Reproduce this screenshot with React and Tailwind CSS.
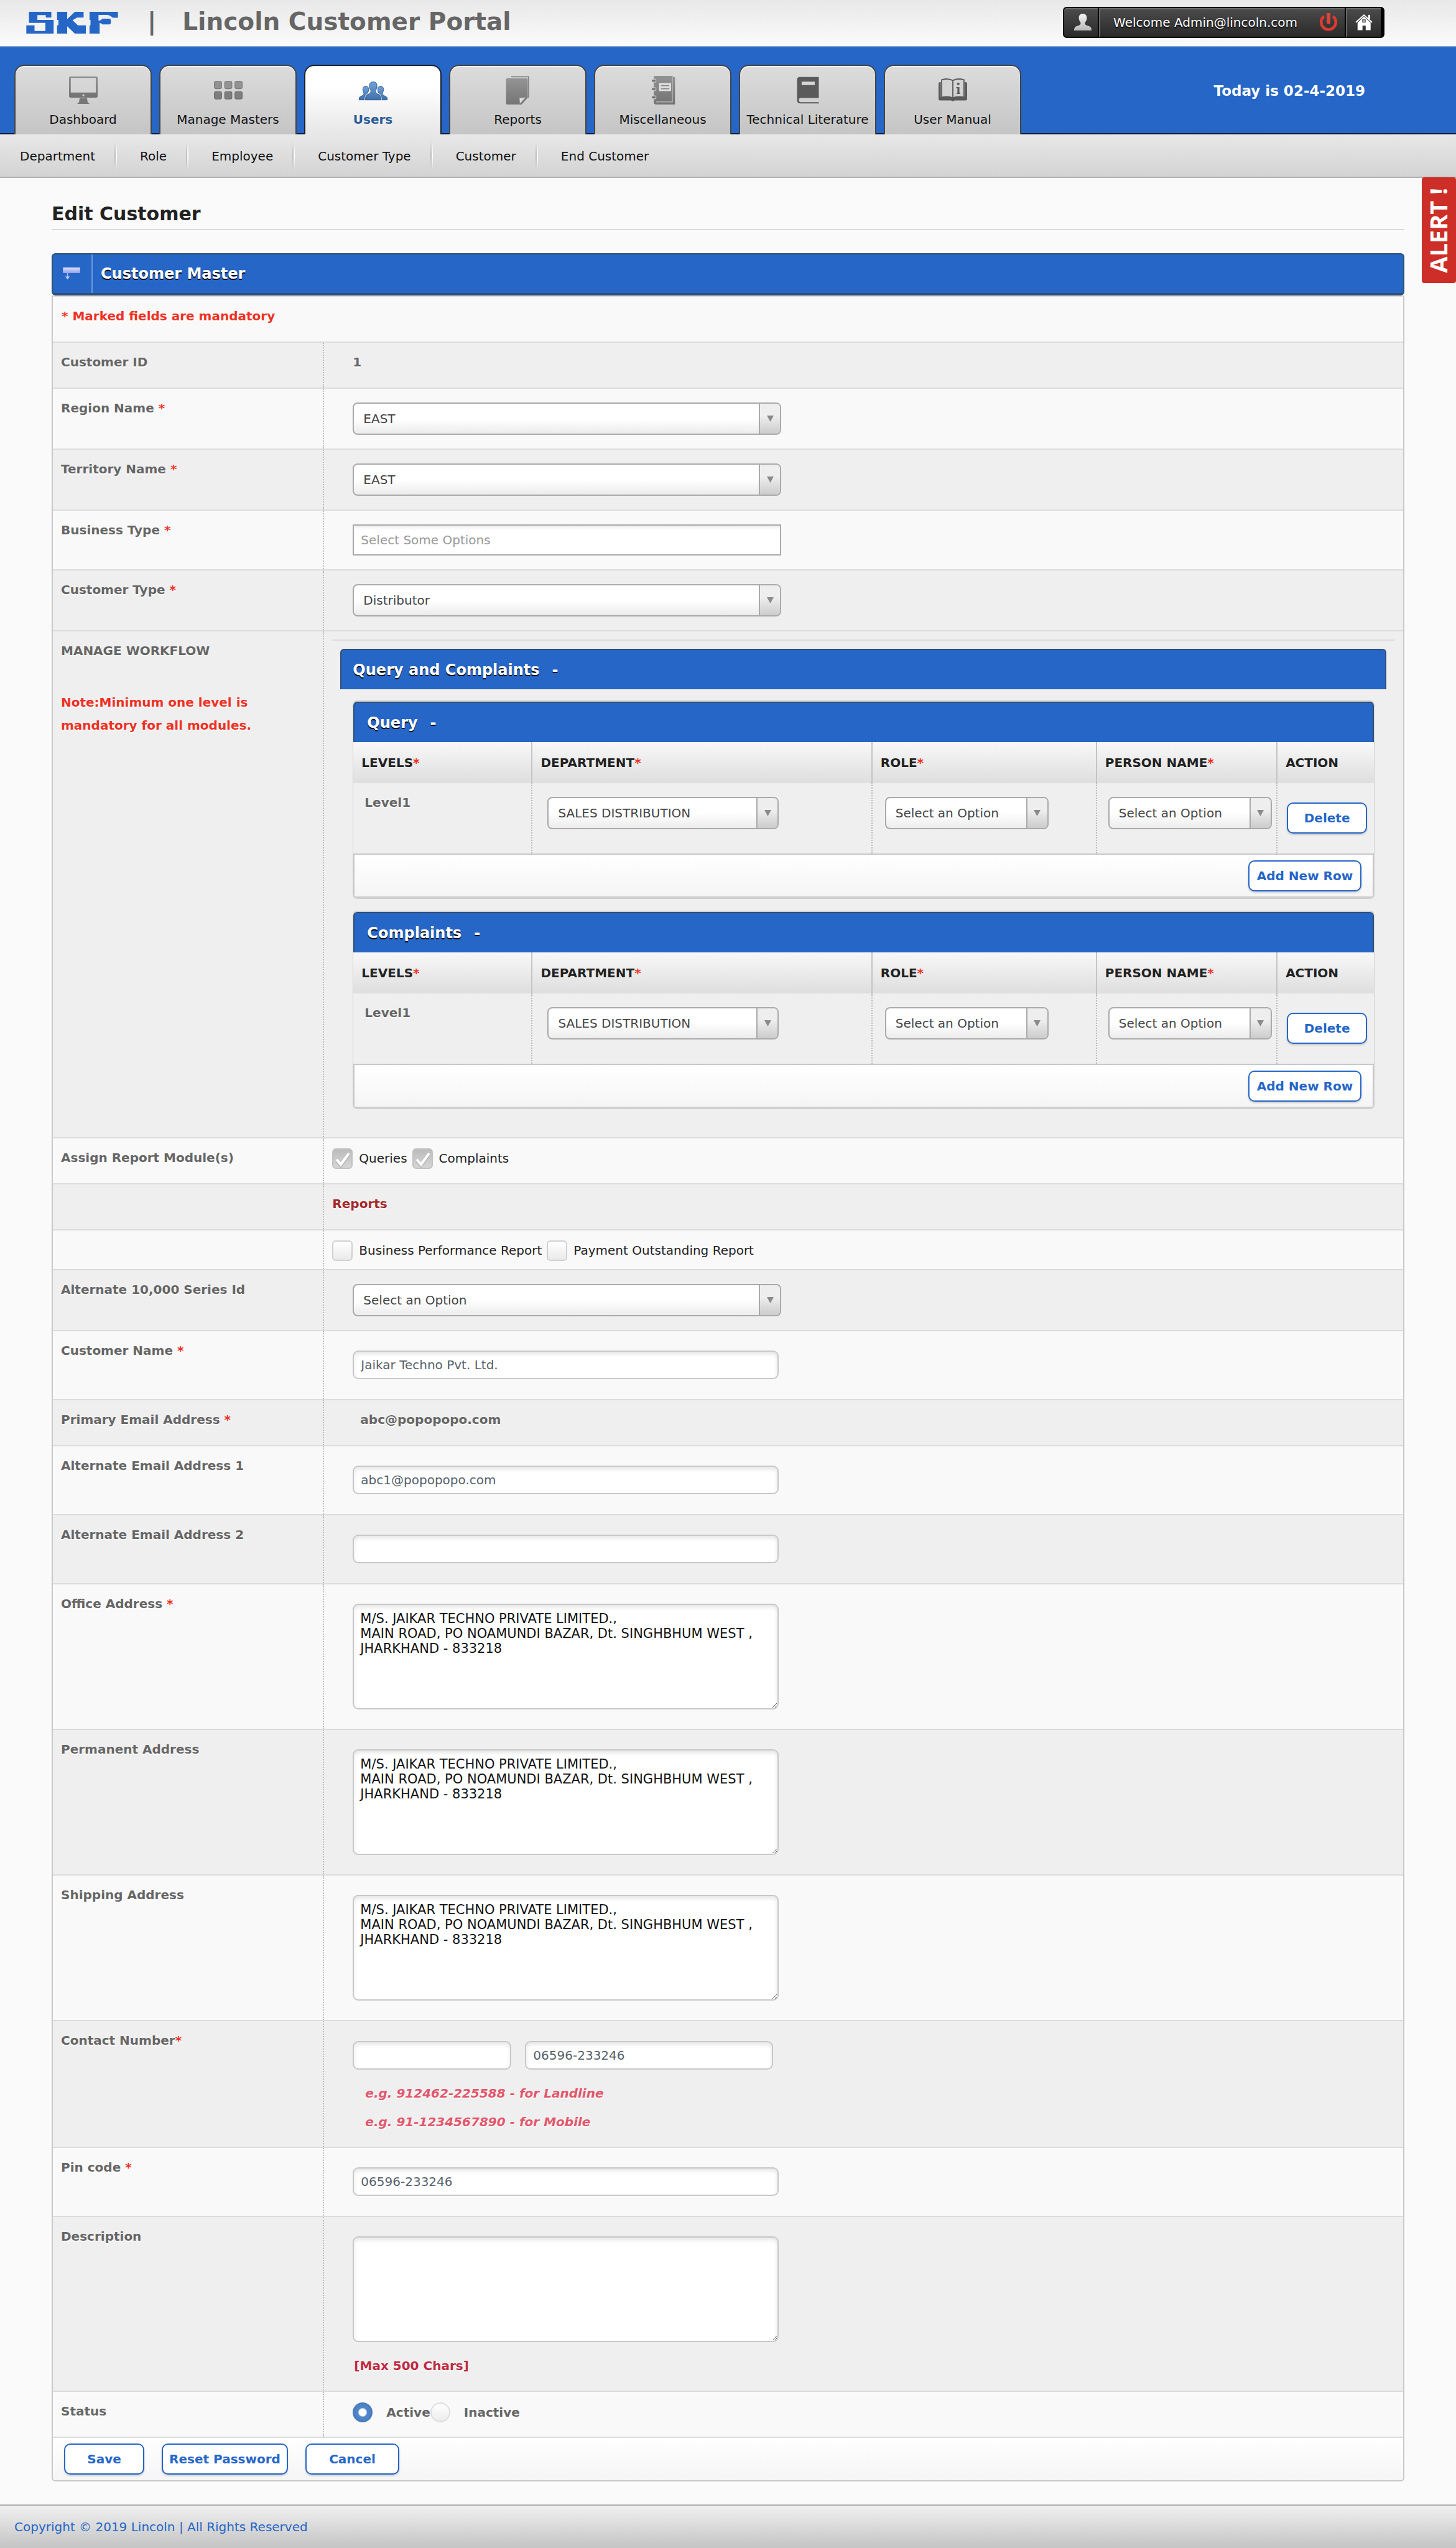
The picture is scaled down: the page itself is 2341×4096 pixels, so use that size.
import React from "react";

const FONT = "font-['DejaVu_Sans',Verdana,sans-serif]";

/* ---------- icons ---------- */

function SkfLogo() {
  return (
    <svg viewBox="48 60 480 114" className="h-[35px] w-[148px]" role="img" aria-label="SKF">
      <g fill="#2566c7">
        <path d="M62 60H179V90H150V77H106V102H191V174H48V131H91V160H148V118H62Z" />
        <path d="M209 60H262V98L302 60H348V90H314L290 104L318 131H360V174H302L262 136V174H209V131H216V102H209Z" />
        <path d="M379 60H528V91H500Q486 76 470 76H426V106Q440 106 446 96H484Q491 98 491 111Q491 124 484 126H446Q440 119 432 119V174H379V131H384V102H379Z" />
      </g>
    </svg>
  );
}

function Grad({ id, a, b }) {
  return (
    <linearGradient id={id} x1="0" y1="0" x2="0" y2="1">
      <stop offset="0" stopColor={a} />
      <stop offset="1" stopColor={b} />
    </linearGradient>
  );
}

function MonitorIcon() {
  return (
    <svg viewBox="0 0 50 50" className="size-[46px]" aria-hidden="true">
      <defs><Grad id="gm" a="#8b8b8b" b="#737373" /></defs>
      <path fill="url(#gm)" fillRule="evenodd" d="M3 1H47Q50 1 50 4V35Q50 38 47 38H3Q0 38 0 35V4Q0 1 3 1ZM4.500 3.500Q3 3.500 3 5V29H47V5Q47 3.500 45.500 3.500ZM25 32A1.800 1.800 0 1 0 25 35.600A1.800 1.800 0 1 0 25 32Z" />
      <path fill="#777" d="M18.500 39H31.500L32.500 46L36 49H14L17.500 46Z" />
    </svg>
  );
}

function GridIcon() {
  return (
    <svg viewBox="0 0 50 50" className="size-[46px]" aria-hidden="true">
      {[0, 18, 36].map((x) => (
        <g key={x}>
          <rect x={x + 0.6} y="9.600" width="12.800" height="12.800" rx="3" fill="#929292" stroke="#7b7b7b" strokeWidth="1.200" />
          <rect x={x + 0.6} y="27.600" width="12.800" height="12.800" rx="3" fill="#7e7e7e" stroke="#6c6c6c" strokeWidth="1.200" />
        </g>
      ))}
    </svg>
  );
}

function UsersIcon() {
  const side = "M12 18C15.500 18 17.500 20.500 17 25C16.800 27 16 28.500 15.200 30C15 33 16.500 34 20 35.500V42H0C0 38 1 36.500 4 35.500C7.500 34 9 33 8.800 30C8 28.500 7.200 27 7 25C6.500 20.500 8.500 18 12 18Z";
  return (
    <svg viewBox="0 0 50 50" className="size-[46px]" aria-hidden="true">
      <defs><Grad id="gu" a="#6fa2dc" b="#3d70ad" /></defs>
      <g fill="url(#gu)" stroke="#33567f" strokeWidth="1">
        <path d={side} />
        <path d={side} transform="matrix(-1 0 0 1 50 0)" />
      </g>
      <path fill="url(#gu)" stroke="#e8eef5" strokeWidth="3" d="M25 10.500C30 10.500 32 14 31.500 19C31.200 22 30 24 29 25.500C28.800 29 30.500 31 35 32.500C38 34 38.500 37 38.500 42H11.500C11.500 37 12 34 15 32.500C19.500 31 21.200 29 21 25.500C20 24 18.800 22 18.500 19C18 14 20 10.500 25 10.500Z" />
      <path fill="url(#gu)" stroke="#33567f" strokeWidth="1" d="M25 10.500C30 10.500 32 14 31.500 19C31.200 22 30 24 29 25.500C28.800 29 30.500 31 35 32.500C38 34 38.500 37 38.500 42H11.500C11.500 37 12 34 15 32.500C19.500 31 21.200 29 21 25.500C20 24 18.800 22 18.500 19C18 14 20 10.500 25 10.500Z" />
    </svg>
  );
}

function ReportsIcon() {
  return (
    <svg viewBox="0 0 50 50" className="size-[46px]" aria-hidden="true">
      <defs><Grad id="gr" a="#949494" b="#747474" /></defs>
      <path fill="none" stroke="#858585" strokeWidth="2" d="M13 1.500H43.500V38" />
      <path fill="url(#gr)" d="M6 4H40Q42 4 42 6V38L31 50H6Q4 50 4 48V6Q4 4 6 4Z" />
      <path fill="#dcdcdc" stroke="#8a8a8a" strokeWidth="1" d="M27 38.500L38.500 37.500L28 49Z" />
    </svg>
  );
}

function NotebookIcon() {
  return (
    <svg viewBox="0 0 50 50" className="size-[46px]" aria-hidden="true">
      <defs><Grad id="gn" a="#939393" b="#727272" /></defs>
      <path fill="url(#gn)" d="M10 0H42V2H45Q46 2 46 3V50H13Q9 50 9 46V2Q9 0 10 0Z" />
      <path fill="none" stroke="#bdbdbd" strokeWidth="1.200" d="M41.500 2V45.500H13" />
      <rect x="18" y="12.500" width="21" height="14" fill="#e0e0e0" />
      <path stroke="#888" strokeWidth="2" d="M21.500 17H36M21.500 22.500H36" />
      <g fill="#bcbcbc"><circle cx="10" cy="8.500" r="3.500" /><circle cx="10" cy="23" r="3.500" /><circle cx="10" cy="37.500" r="3.500" /></g>
      <path stroke="#6f6f6f" strokeWidth="3" strokeLinecap="round" d="M7 8.500H10.500M7 23H10.500M7 37.500H10.500" />
    </svg>
  );
}

function BookIcon() {
  return (
    <svg viewBox="0 0 50 50" className="size-[46px]" aria-hidden="true">
      <path fill="#5a5a5a" fillRule="evenodd" d="M11 2H44V38.500H13Q9.500 38.500 9 42Q9.500 46 13 46H44V48H12Q6 48 6 42V7Q6 2 11 2ZM14 10V16H37V10Z" />
    </svg>
  );
}

function ManualIcon() {
  return (
    <svg viewBox="0 0 50 50" className="size-[46px]" aria-hidden="true">
      <path fill="#5a5a5a" d="M4 11H3Q0 11 0 14V40Q0 43 3 43H22L25 44.500L28 43H47Q50 43 50 40V14Q50 11 47 11H46V37H4Z" />
      <path fill="#d3d3d3" stroke="#5a5a5a" strokeWidth="2" d="M25 8Q16 3.500 5.500 7V37.500Q16 34.500 25 38.500Q34 34.500 44.500 37.500V7Q34 3.500 25 8ZM25 8V38" />
      <circle cx="34.500" cy="14" r="2.200" fill="#5a5a5a" />
      <path fill="#5a5a5a" d="M31 19.500H36.500V29.500H38V31.500H31.500V29.500H33V21.500H31Z" />
    </svg>
  );
}

function PersonIcon() {
  return (
    <svg viewBox="0 0 30 30" className="size-[28px]" aria-hidden="true">
      <defs><Grad id="gp" a="#f4f4f4" b="#b9b9b9" /></defs>
      <path fill="url(#gp)" d="M15 0C19.500 0 22 3 21.800 8C21.500 11.500 20 13.500 18.800 15.500C18.500 18.500 20 19.800 24 21C28.500 22.500 30 24 30 29H0C0 24 1.500 22.500 6 21C10 19.800 11.500 18.500 11.200 15.500C10 13.500 8.500 11.500 8.200 8C8 3 10.500 0 15 0Z" />
    </svg>
  );
}

function PowerIcon() {
  return (
    <svg viewBox="0 0 32 33" className="size-[30px]" aria-hidden="true">
      <path fill="none" stroke="#dd3a2f" strokeWidth="5" d="M8 5.800A13 13 0 1 0 24 5.800" />
      <rect x="13" y="0" width="6" height="19" fill="#e0453a" />
    </svg>
  );
}

function HomeIcon() {
  return (
    <svg viewBox="0 0 30 29" className="size-[28px]" aria-hidden="true">
      <path fill="none" stroke="#fff" strokeWidth="2" d="M1 14.500L15 2L29 14.500" />
      <rect x="22.500" y="1.500" width="3" height="7.500" fill="#fff" />
      <path fill="#fff" d="M15 4.500L26.500 15V28H18V20H12.500V28H4V15Z" />
      <path stroke="#555" strokeWidth="1" d="M12.500 9.500H17.500V14.500H12.500ZM15 9.500V14.500M12.500 12H17.500" fill="none" />
    </svg>
  );
}

function MasterIcon() {
  return (
    <svg viewBox="0 0 30 24" className="h-[22px] w-[28px]" aria-hidden="true">
      <defs><Grad id="gc" a="#dfe4fb" b="#8f9fe6" /></defs>
      <rect x="0" y="1" width="30" height="10" rx="1" fill="url(#gc)" />
      <path fill="none" stroke="#a9b6ee" strokeWidth="2" d="M8 11V19" />
      <path fill="#c3ccf6" d="M4 17H12L8 22Z" />
    </svg>
  );
}

/* ---------- controls ---------- */

function Select({ label, value, className = "" }) {
  return (
    <div className={"relative h-[52px] w-full " + className}>
      <select
        aria-label={label}
        defaultValue={value}
        className="h-full w-full appearance-none rounded-[8px] border-2 border-[#aaa] bg-linear-to-b from-white from-50% to-[#ececec] pl-[15px] pr-[38px] text-[20px] text-[#444]"
      >
        <option>{value}</option>
      </select>
      <span className="pointer-events-none absolute inset-y-[2px] right-[2px] flex w-[34px] items-center justify-center rounded-r-[6px] border-l-2 border-[#aaa] bg-linear-to-b from-[#eee] from-40% to-[#ccc]">
        <svg viewBox="0 0 12 12" className="size-[11px]" aria-hidden="true">
          <path fill="#8a8a8a" d="M0 0H12L6 11Z" />
        </svg>
      </span>
    </div>
  );
}

const FIELD =
  "border-2 border-[#c8c8c8] bg-white shadow-[inset_0_4px_6px_rgba(0,0,0,0.10)]";

function TextInput({ label, value = "", className = "" }) {
  return (
    <input
      type="text"
      aria-label={label}
      defaultValue={value}
      className={FIELD + " block h-[46px] w-full rounded-[9px] px-[11px] text-[20px] text-[#56616b] " + className}
    />
  );
}

function TextArea({ label, value = "" }) {
  return (
    <textarea
      aria-label={label}
      defaultValue={value}
      className={FIELD + " block h-[170px] w-full max-w-[685px] rounded-[9px] px-[10px] py-[10px] text-[21px] leading-[24px] text-[#111]"}
    />
  );
}

function Button({ children, className = "" }) {
  return (
    <button
      type="button"
      className={
        "h-[50px] rounded-[10px] border-2 border-[#2566c7] bg-white text-[20px] font-bold text-[#2566c7] shadow-[0_2px_3px_rgba(0,0,0,0.18)] " +
        className
      }
    >
      {children}
    </button>
  );
}

function Check({ children, checked }) {
  return (
    <label className="flex items-center text-[20px] leading-[33px] text-[#222]">
      <span className="relative mr-[10px] flex size-[33px]">
        <input
          type="checkbox"
          defaultChecked={checked}
          disabled={checked}
          className="peer size-full appearance-none rounded-[6px] border-2 border-[#d0d0d0] bg-linear-to-b from-white to-[#eaeaea] checked:border-[#c2c2c2] checked:from-[#bcbcbc] checked:to-[#d6d6d6]"
        />
        <svg viewBox="0 0 33 33" className="pointer-events-none absolute inset-0 hidden peer-checked:block" aria-hidden="true">
          <path d="M7 19L14 27L27 9" fill="none" stroke="#999" strokeWidth="5" transform="translate(0 1)" opacity="0.4" />
          <path d="M7 18L14 26L27 8" fill="none" stroke="#fff" strokeWidth="4" />
        </svg>
      </span>
      {children}
    </label>
  );
}

function Radio({ children, checked }) {
  return (
    <label className="flex items-center text-[20px] font-bold leading-[32px] text-[#666]">
      <input
        type="radio"
        name="status"
        defaultChecked={checked}
        className="mr-[22px] size-[32px] appearance-none rounded-full border-2 border-[#dedede] bg-linear-to-b from-white to-[#ececec] checked:border-[#4a7ab8] checked:bg-[radial-gradient(circle,#fff_28%,#5288cc_38%,#4379ba_100%)]"
      />
      {children}
    </label>
  );
}

/* ---------- layout pieces ---------- */

const SHADOW = "[text-shadow:0_2px_0_#fff]";
const BAR = "bg-[#2566c7] text-[24px] font-bold text-white [text-shadow:0_2px_0_#000]";

function Star() {
  return <span className="text-[#ee3124]">*</span>;
}

function Row({ label, required, tight, children, body = "" }) {
  return (
    <div className="flex border-b-2 border-[#dcdcdc]">
      <div className={"w-[20.1%] shrink-0 border-r-2 border-dotted border-[#bdbdbd] pl-[13px] pt-[17px] text-[20px] font-bold leading-[28px] text-[#666] " + SHADOW}>
        {label}
        {required && (tight ? <Star /> : <> <Star /></>)}
      </div>
      <div className={"min-w-0 flex-1 " + body}>{children}</div>
    </div>
  );
}

const SELECT_BODY = "py-[22px] pl-[46px]";
const INPUT_BODY = "pt-[31px] pb-[32px] pl-[46px]";
const AREA_BODY = "py-[31px] pl-[46px]";
const TEXT_BODY = "pt-[17px] pb-[27px] text-[20px] font-bold leading-[28px] text-[#666] " + SHADOW;

function LevelTable({ title }) {
  return (
    <section className="mr-[46px] ml-[46px] overflow-hidden rounded-[7px] border-x-1 border-t-2 border-b-4 border-[#d0d0d0]">
      <h4 className={"h-[65px] rounded-t-[6px] border-x-2 border-t-2 border-[#2f5075] pl-[20px] leading-[64px] " + BAR}>
        {title}<span className="ml-[20px]">-</span>
      </h4>
      <table className="w-full table-fixed border-collapse">
        <thead>
          <tr className="h-[66px] bg-linear-to-b from-[#f8f8f8] to-[#dedede] text-left text-[20px] text-[#222]">
            <th className="w-[17.5%] pl-[13px]">LEVELS<Star /></th>
            <th className="w-[33.3%] border-l-2 border-[#c4c4c4] pl-[13px]">DEPARTMENT<Star /></th>
            <th className="w-[22%] border-l-2 border-[#c4c4c4] pl-[13px]">ROLE<Star /></th>
            <th className="w-[17.7%] border-l-2 border-[#c4c4c4] pl-[13px]">PERSON NAME<Star /></th>
            <th className="border-l-2 border-[#c4c4c4] pl-[13px]">ACTION</th>
          </tr>
        </thead>
        <tbody>
          <tr className="h-[113px] align-top">
            <td className={"pt-[17px] pl-[18px] text-[20px] font-bold leading-[28px] text-[#666] " + SHADOW}>Level1</td>
            <td className="border-l-2 border-dotted border-[#bdbdbd] pt-[22px] pl-[24px]">
              <Select label={title + " department"} value="SALES DISTRIBUTION" className="max-w-[372px]" />
            </td>
            <td className="border-l-2 border-dotted border-[#bdbdbd] pt-[22px] pl-[20px]">
              <Select label={title + " role"} value="Select an Option" className="max-w-[263px]" />
            </td>
            <td className="border-l-2 border-dotted border-[#bdbdbd] pt-[22px] pl-[18px]">
              <Select label={title + " person"} value="Select an Option" className="max-w-[263px]" />
            </td>
            <td className="border-l-2 border-dotted border-[#bdbdbd] pt-[31px] pl-[15px]">
              <Button className="w-[129px]">Delete</Button>
            </td>
          </tr>
        </tbody>
      </table>
      <div className="flex h-[69px] items-center justify-end border-x-2 border-t-2 border-[#c8c8c8] bg-linear-to-b from-white to-[#f5f5f5] pr-[18px]">
        <Button className="w-[182px]">Add New Row</Button>
      </div>
    </section>
  );
}

const TABS = [
  ["Dashboard", MonitorIcon],
  ["Manage Masters", GridIcon],
  ["Users", UsersIcon],
  ["Reports", ReportsIcon],
  ["Miscellaneous", NotebookIcon],
  ["Technical Literature", BookIcon],
  ["User Manual", ManualIcon],
];

const LINKS = ["Department", "Role", "Employee", "Customer Type", "Customer", "End Customer"];

const ADDRESS =
  "M/S. JAIKAR TECHNO PRIVATE LIMITED.,\nMAIN ROAD, PO NOAMUNDI BAZAR, Dt. SINGHBHUM WEST ,\nJHARKHAND - 833218";

export default function App() {
  return (
    <div className={"min-h-screen bg-[#fafafa] text-[#222] " + FONT}>
      <header className="flex h-[76px] items-start justify-between border-b-2 border-[#7ba0cc] bg-linear-to-b from-[#e8e8e8] to-[#fbfbfb] pr-[115px] pl-[42px]">
        <div className="flex items-start pt-[12px]">
          <div className="pt-[7px]"><SkfLogo /></div>
          <h1 className="ml-[47px] flex text-[39px] font-bold leading-[46px] text-[#666]">
            <span className="mr-[42px]">|</span>Lincoln Customer Portal
          </h1>
        </div>
        <div className="mt-[11px] flex h-[50px] items-stretch rounded-[6px] border-2 border-black bg-linear-to-b from-[#4c4c4c] to-[#2a2a2a] shadow-[inset_0_2px_0_#6a6a6a]">
          <span className="flex w-[56px] items-center justify-center border-r-2 border-black pl-[5px]"><PersonIcon /></span>
          <span className="flex items-center border-l-2 border-[#666] pr-[35px] pl-[21px] text-[20px] text-white [text-shadow:0_2px_2px_#000]">Welcome Admin@lincoln.com</span>
          <a href="#logout" aria-label="Log out" className="flex items-center border-r-2 border-black pr-[11px]"><PowerIcon /></a>
          <a href="#home" aria-label="Home" className="flex w-[60px] items-center justify-center border-l-2 border-r-4 border-l-[#666] border-r-black"><HomeIcon /></a>
        </div>
      </header>

      <nav className="flex h-[140px] items-end bg-[#2566c7] bg-linear-to-t from-[#0d1a30] from-[2px] to-[#2566c7] to-[2px] pl-[23px]" aria-label="Main">
        <div className="flex gap-[12px]">
          {TABS.map(([name, Icon]) => (
            <a
              key={name}
              href={"#" + name}
              className={
                "flex h-[112px] w-[221px] flex-col items-center justify-between rounded-t-[16px] border-2 border-b-0 bg-linear-to-b pt-[16px] pb-[10px] text-[20px] leading-[28px] whitespace-nowrap shadow-[inset_0_2px_0_#f2f2f2] " +
                (name === "Users"
                  ? "border-[#1b222c] from-white from-30% to-[#e7e7e7] font-bold text-[#2b5c98]"
                  : "border-[#444] from-[#dcdcdc] to-[#c5c5c5] text-[#111]")
              }
            >
              <Icon />
              {name}
            </a>
          ))}
        </div>
        <p className="mr-[146px] ml-auto self-start pt-[56px] text-[23px] font-bold leading-[28px] text-white">Today is 02-4-2019</p>
      </nav>

      <div className="relative">
        <nav className="flex h-[70px] items-center border-b-2 border-[#b0b0b0] bg-linear-to-b from-[#e8e8e8] to-[#d3d3d3]" aria-label="Users">
          {LINKS.map((name, i) => (
            <React.Fragment key={name}>
              {i > 0 && (
                <span className="flex h-[47px]">
                  <span className="w-[2px] bg-linear-to-b from-transparent via-[#bbb] to-transparent" />
                  <span className="w-[2px] bg-linear-to-b from-transparent via-white to-transparent" />
                </span>
              )}
              <a href={"#" + name} className={"pt-[2px] pr-[31px] text-[20px] leading-[28px] text-[#111] " + (i > 0 ? "pl-[37px]" : "pl-[32px]")}>{name}</a>
            </React.Fragment>
          ))}
        </nav>
        <button
          type="button"
          className="absolute top-[69px] right-0 flex h-[170px] w-[55px] items-center justify-center rounded-[4px] bg-[#cd2e28] pr-[3px] font-['Open_Sans',sans-serif] text-[38px] font-bold leading-[52px] text-white"
        >
          <span className="rotate-180 whitespace-nowrap [writing-mode:vertical-rl]">ALERT !</span>
        </button>
      </div>

      <main className="mx-[83px]">
        <h2 className="mt-[38px] mb-[37px] border-b-2 border-[#d9d9d9] pb-[4px] text-[30px] font-bold leading-[40px]">Edit Customer</h2>

        <form>
          <div className={"flex h-[68px] items-center rounded-[6px] border-2 border-b-4 border-[#2f5075] " + BAR}>
            <span className="flex h-full w-[64px] items-center border-r-2 border-[#6d97db] pl-[16px]"><MasterIcon /></span>
            <h3 className="pl-[13px]">Customer Master</h3>
          </div>

          <div className="rounded-b-[6px] border-x-2 border-b-2 border-[#c8c8c8]">
            <p className={"border-y-2 border-[#dcdcdc] bg-[#f9f9f9] pt-[17px] pb-[27px] pl-[14px] text-[20px] font-bold leading-[28px] text-[#ee3124] " + SHADOW}>
              * Marked fields are mandatory
            </p>

            <div className="[&>*:nth-child(odd)]:bg-[#efefef] [&>*:nth-child(even)]:bg-[#f9f9f9]">
              <Row label="Customer ID" body={TEXT_BODY + " pl-[46px]"}>1</Row>
              <Row label="Region Name" required body={SELECT_BODY}>
                <Select label="Region Name" value="EAST" className="max-w-[689px]" />
              </Row>
              <Row label="Territory Name" required body={SELECT_BODY}>
                <Select label="Territory Name" value="EAST" className="max-w-[689px]" />
              </Row>
              <Row label="Business Type" required body={SELECT_BODY}>
                <input
                  type="text"
                  aria-label="Business Type"
                  placeholder="Select Some Options"
                  className="block h-[50px] w-full max-w-[689px] border-2 border-[#aaa] bg-linear-to-b from-[#eee] to-white to-15% px-[11px] text-[20px] placeholder:text-[#999]"
                />
              </Row>
              <Row label="Customer Type" required body={SELECT_BODY}>
                <Select label="Customer Type" value="Distributor" className="max-w-[689px]" />
              </Row>
            </div>

            <div className="[&>*:nth-child(odd)]:bg-[#efefef] [&>*:nth-child(even)]:bg-[#f9f9f9]">
              <Row
                label={
                  <>
                    <p>MANAGE WORKFLOW</p>
                    <p className="mt-[51px] max-w-[330px] leading-[37px] text-[#ee3124]">Note:Minimum one level is mandatory for all modules.</p>
                  </>
                }
                body="pt-[13px] pb-[45px]"
              >
                <div className="mr-[14px] ml-[13px] border-t-2 border-[#dcdcdc]" />
                <h3 className={"mt-[13px] mr-[27px] mb-[18px] ml-[26px] h-[65px] rounded-t-[6px] border-x-2 border-t-2 border-[#2f5075] pl-[18px] leading-[64px] " + BAR}>
                  Query and Complaints<span className="ml-[20px]">-</span>
                </h3>
                <div className="flex flex-col gap-[19px]">
                  <LevelTable title="Query" />
                  <LevelTable title="Complaints" />
                </div>
              </Row>
              <Row label="Assign Report Module(s)" body="flex gap-[8px] pt-[16px] pb-[23px] pl-[13px]">
                <Check checked>Queries</Check>
                <Check checked>Complaints</Check>
              </Row>
              <Row label="" body={TEXT_BODY + " pl-[13px]"}>
                <span className="text-[#a52a2a]">Reports</span>
              </Row>
              <Row label="" body="flex gap-[8px] pt-[16px] pb-[13px] pl-[13px]">
                <Check>Business Performance Report</Check>
                <Check>Payment Outstanding Report</Check>
              </Row>
              <Row label="Alternate 10,000 Series Id" body={SELECT_BODY}>
                <Select label="Alternate 10,000 Series Id" value="Select an Option" className="max-w-[689px]" />
              </Row>
              <Row label="Customer Name" required body={INPUT_BODY}>
                <TextInput label="Customer Name" value="Jaikar Techno Pvt. Ltd." className="max-w-[685px]" />
              </Row>
              <Row label="Primary Email Address" required body={TEXT_BODY + " pl-[58px]"}>abc@popopopo.com</Row>
              <Row label="Alternate Email Address 1" body={INPUT_BODY}>
                <TextInput label="Alternate Email Address 1" value="abc1@popopopo.com" className="max-w-[685px]" />
              </Row>
              <Row label="Alternate Email Address 2" body={INPUT_BODY}>
                <TextInput label="Alternate Email Address 2" className="max-w-[685px]" />
              </Row>
              <Row label="Office Address" required body={AREA_BODY}>
                <TextArea label="Office Address" value={ADDRESS} />
              </Row>
              <Row label="Permanent Address" body={AREA_BODY}>
                <TextArea label="Permanent Address" value={ADDRESS} />
              </Row>
              <Row label="Shipping Address" body={AREA_BODY}>
                <TextArea label="Shipping Address" value={ADDRESS} />
              </Row>
              <Row label="Contact Number" required tight body="pt-[32px] pb-[26px] pl-[46px]">
                <div className="flex gap-[22px]">
                  <TextInput label="Contact code" className="max-w-[255px]" />
                  <TextInput label="Contact Number" value="06596-233246" className="max-w-[399px]" />
                </div>
                <div className={"mt-[24px] flex flex-col gap-[18px] pl-[20px] text-[20px] font-bold italic leading-[28px] text-[#e2566c] " + SHADOW}>
                  <p>e.g. 912462-225588 - for Landline</p>
                  <p>e.g. 91-1234567890 - for Mobile</p>
                </div>
              </Row>
              <Row label="Pin code" required body={INPUT_BODY}>
                <TextInput label="Pin code" value="06596-233246" className="max-w-[685px]" />
              </Row>
              <Row label="Description" body="pt-[31px] pb-[26px] pl-[46px]">
                <TextArea label="Description" />
                <p className={"mt-[24px] pl-[2px] text-[20px] font-bold leading-[28px] text-[#c02942] " + SHADOW}>[Max 500 Chars]</p>
              </Row>
              <Row label="Status" body="flex pt-[17px] pb-[23px] pl-[46px]">
                <Radio checked>Active</Radio>
                <Radio>Inactive</Radio>
              </Row>
            </div>

            <div className="flex gap-[28px] rounded-b-[6px] bg-linear-to-b from-white to-[#f5f5f5] py-[9px] pl-[18px]">
              <Button className="w-[129px]">Save</Button>
              <Button className="w-[203px]">Reset Password</Button>
              <Button className="w-[151px]">Cancel</Button>
            </div>
          </div>
        </form>
      </main>

      <footer className="mt-[37px] flex h-[70px] items-center border-t-2 border-[#b0b0b0] bg-linear-to-b from-[#f0f0f0] to-[#c4c4c4] pl-[23px] text-[20px] text-[#2566c7]">
        Copyright © 2019 Lincoln | All Rights Reserved
      </footer>
    </div>
  );
}
